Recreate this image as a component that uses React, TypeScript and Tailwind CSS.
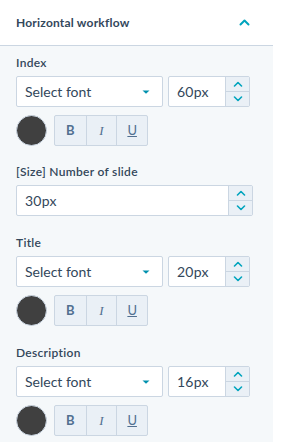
import type { ReactNode } from 'react';

const FONT = { fontFamily: 'Lato, "Open Sans", sans-serif' };

function Chevron({ up, className }: { up?: boolean; className?: string }) {
  return (
    <svg width="10" height="6" viewBox="0 0 10 6" className={className}>
      <path
        d={up ? 'M1.5 5 L5 1.5 L8.5 5' : 'M1.5 1 L5 4.5 L8.5 1'}
        fill="none"
        stroke="#00a4bd"
        strokeWidth="1.6"
        strokeLinecap="round"
        strokeLinejoin="round"
      />
    </svg>
  );
}

function Stepper() {
  return (
    <div className="flex w-[24px] flex-col border-l border-[#cbd6e2] bg-[#eaf0f6]">
      <div className="flex flex-1 items-center justify-center border-b border-[#cbd6e2]">
        <Chevron up />
      </div>
      <div className="flex flex-1 items-center justify-center">
        <Chevron />
      </div>
    </div>
  );
}

function NumberBox({ value, wide }: { value: string; wide?: boolean }) {
  return (
    <div
      className={`flex h-[31px] rounded-[2px] border border-[#cbd6e2] bg-white ${
        wide ? 'w-[237px]' : 'w-[82px]'
      }`}
    >
      <div className="flex flex-1 items-center pl-[8px] text-[14px] tracking-[0.2px] text-[#33475b]">{value}</div>
      <Stepper />
    </div>
  );
}

function FontSelect() {
  return (
    <div className="flex h-[31px] w-[147px] items-center justify-between rounded-[2px] border border-[#cbd6e2] bg-white pl-[8px] pr-[12px] text-[14px] text-[#33475b]">
      <span>Select font</span>
      <svg width="8" height="4" viewBox="0 0 8 4">
        <path d="M0.5 0.5 L7.5 0.5 L4 3.8 Z" fill="#0091ae" />
      </svg>
    </div>
  );
}

function StyleRow() {
  const btn = 'flex h-full w-[31px] items-center justify-center text-[13px] text-[#516f90]';
  return (
    <div className="flex items-center gap-[7px]">
      <div className="h-[31px] w-[31px] rounded-full border border-[#cbd6e2] bg-[#404040]" />
      <div className="flex h-[31px] w-[94px] rounded-[2px] border border-[#cbd6e2] bg-[#eaf0f6]">
        <div className={`${btn} font-bold`}>B</div>
        <div className={`${btn} border-l border-[#cbd6e2] italic`} style={{ fontFamily: '"Liberation Serif", serif' }}>
          I
        </div>
        <div className={`${btn} border-l border-[#cbd6e2] underline`}>U</div>
      </div>
    </div>
  );
}

function Field({ label, children }: { label: string; children: ReactNode }) {
  return (
    <div className="flex flex-col">
      <div className="mb-[5px] h-[16px] text-[12px] leading-[16px] font-semibold tracking-[0.3px] text-[#33475b]">
        {label}
      </div>
      {children}
    </div>
  );
}

function TypoField({ label, size }: { label: string; size: string }) {
  return (
    <Field label={label}>
      <div className="flex gap-[5px]">
        <FontSelect />
        <NumberBox value={size} />
      </div>
      <div className="mt-[8px]">
        <StyleRow />
      </div>
    </Field>
  );
}

export default function App() {
  return (
    <div className="h-[442px] w-[284px] bg-white" style={FONT}>
      <div className="w-[273px]">
        <div className="flex h-[46px] items-center justify-between border-b border-[#cbd6e2] bg-white pr-[23px] pl-[16px]">
          <span className="text-[12px] font-bold tracking-[0.2px] text-[#33475b]">Horizontal workflow</span>
          <svg width="11" height="7" viewBox="0 0 11 7">
            <path d="M1.5 5.5 L5.5 1.5 L9.5 5.5" fill="none" stroke="#00a4bd" strokeWidth="2" strokeLinecap="round" strokeLinejoin="round" />
          </svg>
        </div>
        <div className="flex h-[396px] flex-col gap-[18px] bg-[#f5f8fa] px-[16px] pt-[9px]">
          <TypoField label="Index" size="60px" />
          <Field label="[Size] Number of slide">
            <NumberBox value="30px" wide />
          </Field>
          <div className="mt-[1px]">
            <TypoField label="Title" size="20px" />
          </div>
          <div className="mt-[1px]">
            <TypoField label="Description" size="16px" />
          </div>
        </div>
      </div>
    </div>
  );
}
